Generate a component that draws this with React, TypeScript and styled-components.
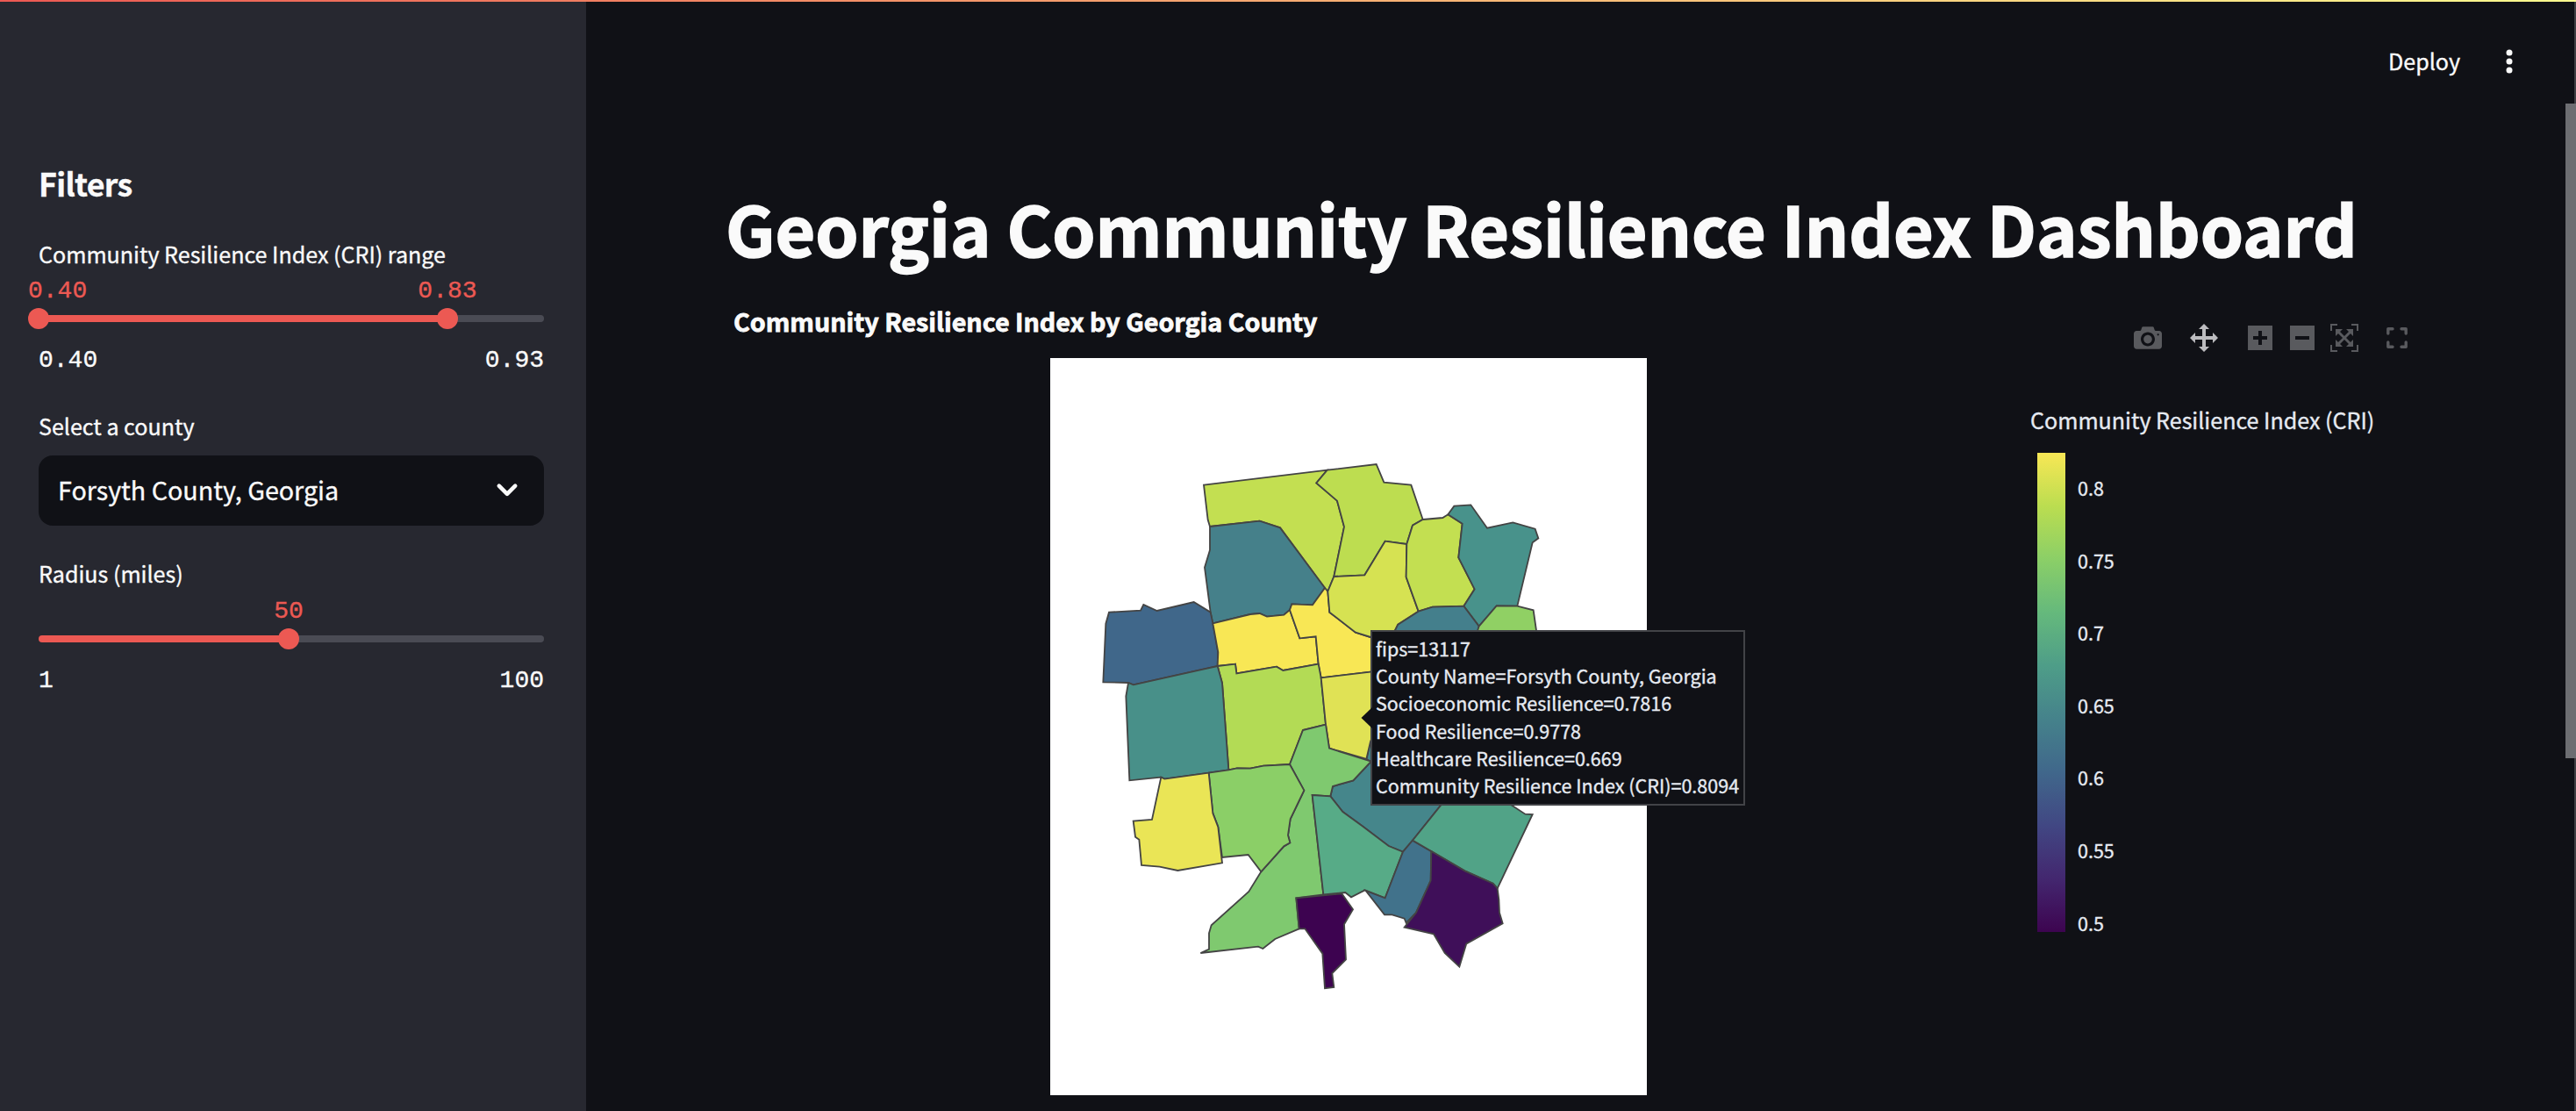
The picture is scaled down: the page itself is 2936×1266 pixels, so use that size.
import React from "react";
import styled, { createGlobalStyle } from "styled-components";

const SANS = `"Noto Sans CJK SC", "Noto Sans", sans-serif`;
const MONO = `"Liberation Mono", monospace`;

const GlobalStyle = createGlobalStyle`
  * { box-sizing: border-box; }
  body {
    margin: 0;
    background: #101116;
    color: #fafafa;
    font-family: ${SANS};
    overflow: hidden;
    -webkit-text-stroke: 0.35px currentColor;
  }
`;

const Shell = styled.div`
  display: flex;
  position: relative;
  width: 2936px;
  height: 1266px;
  overflow: hidden;
  background: #101116;
`;

const TopStripe = styled.div`
  position: absolute;
  top: 0;
  left: 0;
  right: 0;
  height: 2px;
  background: linear-gradient(90deg, #ec5953, #fffb8f);
`;

const ScrollThumb = styled.div`
  position: absolute;
  top: 118px;
  right: 0;
  width: 12px;
  height: 746px;
  background: #6d6e72;
`;

const WindowEdge = styled.div`
  position: absolute;
  top: 2px;
  right: 0;
  bottom: 0;
  width: 2px;
  background: #3f4044;
`;

/* ---------- sidebar ---------- */

const Sidebar = styled.aside`
  width: 668px;
  flex: none;
  padding: 184px 48px 0 44px;
  background: #272830;
`;

const SidebarTitle = styled.h2`
  margin: 0 0 37px;
  font-size: 35.8px;
  line-height: 48px;
  font-weight: 700;
  letter-spacing: -0.7px;
`;

const Field = styled.section<{ $gap?: number }>`
  margin-bottom: ${(p) => p.$gap ?? 0}px;
`;

const Label = styled.div`
  font-size: 25.07px;
  line-height: 40px;
  white-space: nowrap;
`;

const Track = styled.div<{ $from: number; $to: number; $before: number }>`
  position: relative;
  height: 8px;
  margin-top: ${(p) => p.$before}px;
  border-radius: 4px;
  background: linear-gradient(
    90deg,
    #ec5953 ${(p) => p.$from}%,
    #ec5953 ${(p) => p.$to}%,
    #4a4b54 ${(p) => p.$to}%
  );
`;

const Thumb = styled.div`
  position: absolute;
  top: -8px;
  width: 24px;
  height: 24px;
  margin-left: -12px;
  border-radius: 50%;
  background: #ec5953;
`;

const ThumbValue = styled.div<{ $alignStart?: boolean }>`
  position: absolute;
  bottom: 27px;
  left: ${(p) => (p.$alignStart ? "0" : "50%")};
  transform: ${(p) => (p.$alignStart ? "none" : "translateX(-50%)")};
  font: 28px/32px ${MONO};
  color: #ec5953;
`;

const Bounds = styled.div`
  display: flex;
  justify-content: space-between;
  margin-top: 28px;
  font: 28px/32px ${MONO};
`;

const Select = styled.div`
  display: flex;
  align-items: center;
  justify-content: space-between;
  height: 80px;
  margin-top: 14px;
  padding: 0 26px 2px 22px;
  border-radius: 16px;
  background: #101116;
  font-size: 28.65px;
  line-height: 48px;
`;

type Stop = { at: number; text: string; alignStart?: boolean };

function Slider(props: {
  label: string;
  from: number;
  to: number;
  stops: Stop[];
  min: string;
  max: string;
  before: number;
  gap?: number;
}) {
  return (
    <Field $gap={props.gap}>
      <Label>{props.label}</Label>
      <Track $from={props.from} $to={props.to} $before={props.before}>
        {props.stops.map((s) => (
          <Thumb key={s.text} style={{ left: `${s.at}%` }}>
            <ThumbValue $alignStart={s.alignStart}>{s.text}</ThumbValue>
          </Thumb>
        ))}
      </Track>
      <Bounds>
        <span>{props.min}</span>
        <span>{props.max}</span>
      </Bounds>
    </Field>
  );
}

/* ---------- main ---------- */

const Main = styled.main`
  flex: 1;
  min-width: 0;
`;

const Header = styled.header`
  display: flex;
  justify-content: flex-end;
  align-items: center;
  height: 120px;
  padding: 20px 69px 0 0;
  gap: 49px;
  font-size: 25.07px;
  line-height: 40px;
`;

const DeployButton = styled.span`
  padding-bottom: 2px;
`;

const Content = styled.div`
  width: 1920px;
  margin-left: 158px;
  padding-top: 86px;
`;

const Title = styled.h1`
  margin: 0;
  padding-left: 1px;
  font-size: 78.8px;
  line-height: 106px;
  font-weight: 700;
  white-space: nowrap;
  -webkit-text-stroke-width: 1.6px;
`;

const ChartHeader = styled.div`
  display: flex;
  justify-content: space-between;
  align-items: flex-start;
  height: 96px;
  padding: 32px 2px 0 10px;
`;

const ChartTitle = styled.div`
  font-size: 28.65px;
  line-height: 44px;
  font-weight: 700;
  white-space: nowrap;
  -webkit-text-stroke-width: 0.8px;
`;

const Toolbar = styled.div`
  display: flex;
  align-items: center;
  height: 32px;
  margin-top: 25px;
`;

const ToolIcon = styled.svg<{ $before?: number; $active?: boolean }>`
  display: block;
  margin-left: ${(p) => p.$before ?? 0}px;
  fill: ${(p) => (p.$active ? "#bcbcbf" : "#595a5e")};
`;

const ChartBody = styled.div`
  display: flex;
  align-items: flex-start;
  padding-left: 371px;
`;

const MapPanel = styled.div`
  position: relative;
  flex: none;
  width: 680px;
  height: 840px;
  background: #fff;
`;

const Legend = styled.div`
  margin: 48px 0 0 438px;
`;

const LegendTitle = styled.div`
  margin-left: -1px;
  font-size: 25.07px;
  line-height: 44px;
  color: #e6eaf1;
  white-space: nowrap;
`;

const Scale = styled.div`
  display: flex;
  align-items: flex-start;
  margin: 16px 0 0 7px;
  gap: 14px;
`;

const Ramp = styled.div`
  width: 32px;
  height: 546px;
  background: linear-gradient(
    0deg,
    #3d0450, #43276f, #414783, #40678b, #45828b, #4e9d88, #65b97c, #8bcf67, #bbdd50, #f8e755
  );
`;

const Ticks = styled.div`
  display: grid;
  grid-auto-rows: 82.6px;
  margin-top: -1px;
  font-size: 21.5px;
  line-height: 82.6px;
  color: #e6eaf1;
`;

const Tooltip = styled.div`
  position: absolute;
  left: 365px;
  top: 310px;
  width: 427px;
  height: 200px;
  padding: 3px 0 0 4px;
  border: 2px solid #424347;
  background: #101116;
  color: #e6eaf1;
  font-size: 21.5px;
  line-height: 31.2px;
  white-space: nowrap;
`;

const TooltipArrow = styled.svg`
  position: absolute;
  left: -14px;
  top: 86px;
`;

const COUNTIES: [string, string][] = [
  ["#c3df51", "396,128 818,77 781,121 852,182 876,271 841,441 820,492 810,480 657,274 587,251 417,270 410,247"],
  ["#bddd50", "818,77 986,57 1012,119 1105,128 1145,246 1110,266 1090,330 1016,320 946,436 841,441 876,271 852,182 781,121"],
  ["#45808a", "417,270 587,251 657,274 810,480 768,538 697,535 690,555 670,572 612,578 587,567 555,570 427,601 419,563 399,410 417,350"],
  ["#40678a", "72,563 180,557 190,537 236,558 362,528 419,563 427,601 445,700 443,747 155,811 138,804 52,802 61,602"],
  ["#f8e755", "427,601 555,570 587,567 612,578 670,572 690,555 724,652 779,646 788,740 667,762 645,749 508,772 504,740 443,747 445,700"],
  ["#f8e755", "810,480 820,492 826,563 915,632 966,648 1010,660 1010,762 966,767 797,787 788,740 779,646 724,652 690,555 697,535 768,538"],
  ["#d6e252", "841,441 946,436 1016,320 1090,330 1088,443 1130,560 1060,605 1050,625 1040,670 966,648 915,632 826,563 820,492"],
  ["#c3df51", "1145,246 1213,240 1231,229 1280,260 1267,376 1322,484 1285,542 1178,545 1130,560 1088,443 1090,330 1110,266"],
  ["#48928b", "1231,229 1252,200 1309,196 1365,275 1453,256 1529,278 1540,310 1520,325 1468,542 1397,541 1337,611 1285,542 1322,484 1267,376 1280,260"],
  ["#447f8c", "1130,560 1178,545 1285,542 1337,611 1320,700 1040,700 1050,625 1060,605"],
  ["#90d064", "1397,541 1468,542 1523,556 1533,625 1533,720 1300,720 1337,611"],
  ["#b3db55", "443,747 504,740 508,772 645,749 667,762 788,740 797,787 813,947 735,966 690,1083 600,1088 555,1097 510,1096 481,1102 459,805"],
  ["#489089", "155,811 443,747 459,805 481,1102 413,1112 262,1133 250,1127 142,1138 130,850 138,804"],
  ["#45868b", "829,1192 837,1158 907,1138 968,1073 952,1065 966,1005 1300,1000 1207,1222 1110,1343 1077,1382 1028,1362 940,1295 871,1245"],
  ["#e0e255", "797,787 966,767 1010,762 1010,900 966,1005 952,1065 825,1028 813,947"],
  ["#7fc96f", "735,966 813,947 825,1028 968,1073 907,1138 837,1158 829,1192 767,1188 805,1528 712,1540 722,1645 640,1680 598,1713 582,1706 385,1728 414,1715 414,1660 422,1633 550,1518 592,1450 670,1363 691,1351 684,1325 692,1270 739,1172 690,1083"],
  ["#8bcf67", "413,1112 481,1102 510,1096 555,1097 600,1088 690,1083 739,1172 692,1270 684,1325 691,1351 670,1363 592,1450 548,1392 459,1401 445,1297 427,1250"],
  ["#eae556", "250,1127 262,1133 413,1112 427,1250 445,1297 459,1420 307,1446 245,1433 183,1428 175,1340 162,1331 155,1277 219,1272"],
  ["#57ab87", "767,1188 829,1192 871,1245 940,1295 1028,1362 1077,1382 1016,1540 947,1513 900,1537 880,1521 805,1528"],
  ["#41728b", "1077,1382 1110,1343 1174,1380 1172,1480 1122,1590 1088,1625 1082,1610 1040,1597 1014,1597 950,1515 1016,1540"],
  ["#51a387", "1207,1222 1300,1100 1445,1220 1495,1253 1520,1254 1400,1507 1385,1490 1290,1448 1110,1343"],
  ["#3f0f59", "1174,1380 1290,1448 1385,1490 1400,1507 1405,1545 1407,1590 1418,1627 1294,1696 1270,1775 1220,1728 1182,1663 1082,1640 1122,1590 1172,1480"],
  ["#3d0350", "712,1540 868,1525 906,1579 876,1630 882,1750 835,1797 841,1845 810,1849 802,1730 742,1645 722,1645"],
];

const CAMERA =
  "m500 450c-83 0-150-67-150-150 0-83 67-150 150-150 83 0 150 67 150 150 0 83-67 150-150 150z m400 150h-120c-16 0-34 13-39 29l-31 93c-6 15-23 28-40 28h-340c-16 0-34-13-39-28l-31-94c-6-15-23-28-40-28h-120c-55 0-100-45-100-100v-450c0-55 45-100 100-100h800c55 0 100 45 100 100v450c0 55-45 100-100 100z m-400-550c-138 0-250 112-250 250 0 138 112 250 250 250 138 0 250-112 250-250 0-138-112-250-250-250z m365 380c-19 0-35 16-35 35 0 19 16 35 35 35 19 0 35-16 35-35 0-19-16-35-35-35z";
const PAN =
  "m1000 350l-187 188 0-125-250 0 0 250 125 0-188 187-187-187 125 0 0-250-250 0 0 125-188-188 186-187 0 125 252 0 0-250-125 0 187-188 188 188-125 0 0 250 250 0 0-126 187 188z";
const PLUS =
  "m1 787l0-875 875 0 0 875-875 0z m687-500l-187 0 0-187-125 0 0 187-188 0 0 125 188 0 0 187 125 0 0-187 187 0 0-125z";
const MINUS = "m0 788l0-876 876 0 0 876-876 0z m688-500l-500 0 0 125 500 0 0-125z";
const AUTOSCALE =
  "m250 850l-187 0-63 0 0-62 0-188 63 0 0 188 187 0 0 62z m688 0l-188 0 0-62 188 0 0-188 62 0 0 188 0 62-62 0z m-875-938l0 188-63 0 0-188 0-62 63 0 187 0 0 62-187 0z m875 188l0-188-188 0 0-62 188 0 62 0 0 62 0 188-62 0z m-125 188l-1 0-93-94-156 156 156 156 92-93 2 0 0 250-250 0 0-2 93-92-156-156-156 156 94 92 0 2-250 0 0-250 0 0 93 93 157-156-157-156-93 94 0 0 0-250 250 0 0 0-94 93 156 157 156-157-93-93 0 0 250 0 0 250z";

function PlotIcon(props: { d: string; size?: number; before?: number; active?: boolean }) {
  const small = props.size === 28;
  return (
    <ToolIcon
      $before={props.before}
      $active={props.active}
      width={props.size ?? 32}
      height={props.size ?? 32}
      viewBox={small ? "0 62 876 876" : "0 0 1000 1000"}
    >
      <path transform="matrix(1 0 0 -1 0 850)" d={props.d} />
    </ToolIcon>
  );
}

const TOOLTIP_LINES = [
  "fips=13117",
  "County Name=Forsyth County, Georgia",
  "Socioeconomic Resilience=0.7816",
  "Food Resilience=0.9778",
  "Healthcare Resilience=0.669",
  "Community Resilience Index (CRI)=0.8094",
];

export default function App() {
  return (
    <Shell>
      <GlobalStyle />
      <Sidebar>
        <SidebarTitle>Filters</SidebarTitle>
        <Slider
          label="Community Resilience Index (CRI) range"
          from={0}
          to={80.9}
          stops={[
            { at: 0, text: "0.40", alignStart: true },
            { at: 80.9, text: "0.83" },
          ]}
          min="0.40"
          max="0.93"
          before={50}
          gap={38}
        />
        <Field $gap={34}>
          <Label>Select a county</Label>
          <Select>
            Forsyth County, Georgia
            <svg width="32" height="32" viewBox="0 0 8 8">
              <path
                d="M1.7 2.9 4 5.2 6.300 2.900"
                fill="none"
                stroke="#fafafa"
                strokeWidth="1.15"
                strokeLinecap="round"
                strokeLinejoin="round"
              />
            </svg>
          </Select>
        </Field>
        <Slider
          label="Radius (miles)"
          from={0}
          to={49.5}
          stops={[{ at: 49.5, text: "50" }]}
          min="1"
          max="100"
          before={51}
        />
      </Sidebar>
      <Main>
        <Header>
          <DeployButton>Deploy</DeployButton>
          <svg width="14" height="32" viewBox="0 0 14 32" fill="#fafafa">
            <circle cx="7" cy="6" r="3.5" />
            <circle cx="7" cy="16" r="3.5" />
            <circle cx="7" cy="26" r="3.5" />
          </svg>
        </Header>
        <Content>
          <Title>Georgia Community Resilience Index Dashboard</Title>
          <ChartHeader>
            <ChartTitle>Community Resilience Index by Georgia County</ChartTitle>
            <Toolbar>
              <PlotIcon d={CAMERA} />
              <PlotIcon d={PAN} before={32} active />
              <PlotIcon d={PLUS} size={28} before={34} />
              <PlotIcon d={MINUS} size={28} before={20} />
              <PlotIcon d={AUTOSCALE} before={18} />
              <ToolIcon $before={32} width="24" height="24" viewBox="0 0 24 24">
                <path
                  d="M1.8 7V1.8H7M17 1.8H22.2V7M22.2 17V22.2H17M7 22.2H1.8V17"
                  fill="none"
                  stroke="#595a5e"
                  strokeWidth="3.4"
                  strokeLinejoin="round"
                  strokeLinecap="round"
                />
              </ToolIcon>
            </Toolbar>
          </ChartHeader>
          <ChartBody>
            <MapPanel>
              <svg width="680" height="839" viewBox="-129 -306 2040 2517">
                {COUNTIES.map(([fill, points], i) => (
                  <polygon key={i} points={points} fill={fill} stroke="#444" strokeWidth="5.5" />
                ))}
              </svg>
              <Tooltip>
                <TooltipArrow width="14" height="24" viewBox="0 0 14 24">
                  <path d="M14 0 1.5 12 14 24Z" fill="#101116" />
                </TooltipArrow>
                {TOOLTIP_LINES.map((line) => (
                  <div key={line}>{line}</div>
                ))}
              </Tooltip>
            </MapPanel>
            <Legend>
              <LegendTitle>Community Resilience Index (CRI)</LegendTitle>
              <Scale>
                <Ramp />
                <Ticks>
                  {["0.8", "0.75", "0.7", "0.65", "0.6", "0.55", "0.5"].map((t) => (
                    <span key={t}>{t}</span>
                  ))}
                </Ticks>
              </Scale>
            </Legend>
          </ChartBody>
        </Content>
      </Main>
      <WindowEdge />
      <ScrollThumb />
      <TopStripe />
    </Shell>
  );
}
